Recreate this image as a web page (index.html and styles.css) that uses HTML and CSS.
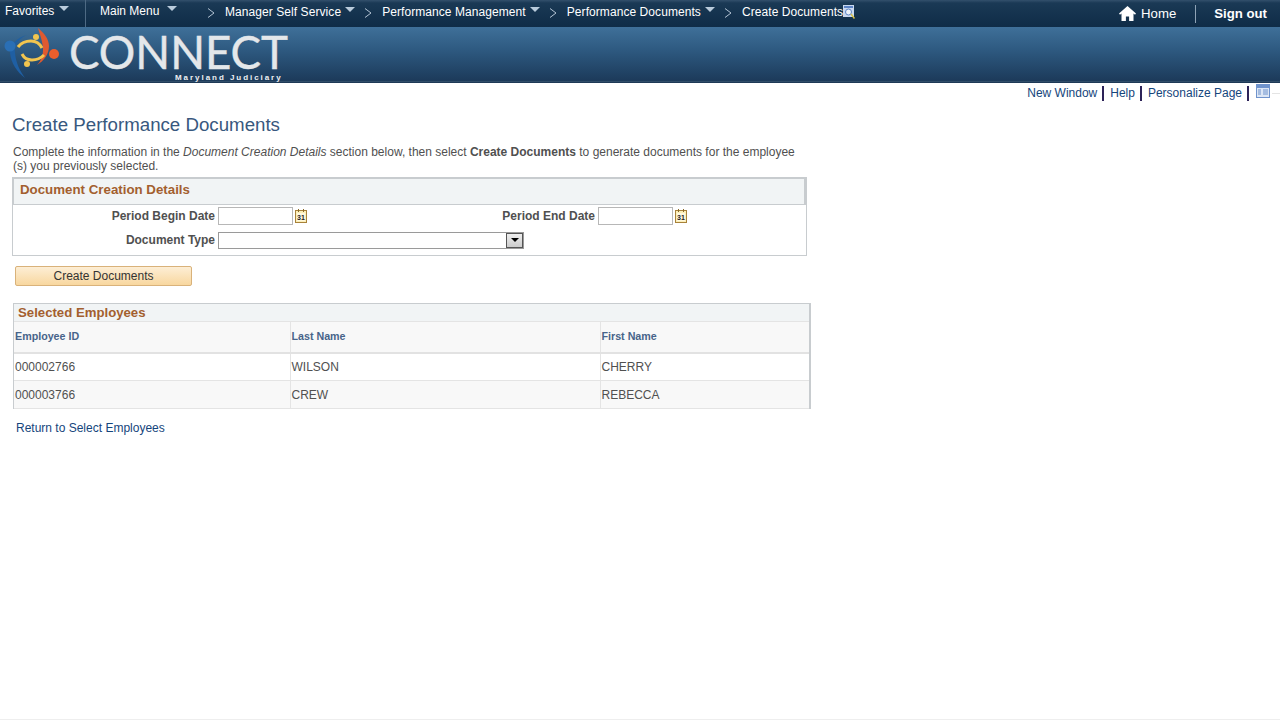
FILE: index.html
```html
<!DOCTYPE html>
<html lang="en">
<head>
<meta charset="utf-8">
<title>Create Performance Documents</title>
<link rel="stylesheet" href="styles.css">
</head>
<body>
<header class="masthead">
  <nav class="topbar">
    <div class="menu-fav"><span>Favorites</span><i class="tri"></i></div>
    <div class="menu-main"><span>Main Menu</span><i class="tri"></i></div>
    <div class="crumbs">
      <svg class="chev" viewBox="0 0 8 10"><path d="M1 .5 7 5 1 9.5"/></svg>
      <span class="crumb">Manager Self Service</span><i class="tri"></i>
      <svg class="chev" viewBox="0 0 8 10"><path d="M1 .5 7 5 1 9.5"/></svg>
      <span class="crumb">Performance Management</span><i class="tri"></i>
      <svg class="chev" viewBox="0 0 8 10"><path d="M1 .5 7 5 1 9.5"/></svg>
      <span class="crumb">Performance Documents</span><i class="tri"></i>
      <svg class="chev" viewBox="0 0 8 10"><path d="M1 .5 7 5 1 9.5"/></svg>
      <span class="crumb crumb-last">Create Documents</span>
      <svg class="search" viewBox="0 0 12 14"><rect width="11" height="12" fill="#c9d8f0"/><rect x="1" y="1" width="9" height="2" fill="#5c83c4"/><circle cx="5.5" cy="7" r="3" fill="#eef3fb" stroke="#5c83c4"/><path d="M8 9l3.5 4.5" stroke="#d8c24a" stroke-width="1.5"/></svg>
    </div>
    <div class="account">
      <svg class="house" viewBox="0 0 17 15"><path fill="#fff" d="M8.5 0 0 7.6l1 1.1 1.5-1.3V15h4.4v-4.5h3.2V15h4.4V7.4L16 8.7l1-1.1z"/></svg>
      <a class="home">Home</a>
      <a class="signout">Sign out</a>
    </div>
  </nav>
  <div class="banner">
    <svg class="logo" viewBox="0 2 66 56">
      <path fill="#1f5fa3" d="M27 10C19 13 14 20 15 28c1 10 5 18 10 25-8-6-14-15-15-25 0-9 8-16 17-18z"/>
      <circle cx="10" cy="21" r="5.5" fill="#2a6fb5"/>
      <path fill="#df5a30" d="M38 3c6 5 11 11 11 18 0 8-5 15-12 19 3-3 6-8 6-15 0-8-3-15-5-22z"/>
      <circle cx="54" cy="29" r="5" fill="#ea5e2c"/>
      <path fill="none" stroke="#f2c54f" stroke-width="3" d="M18 22c3-4 8-6 13-6 5 0 9 3 11 7"/>
      <path fill="none" stroke="#f2c54f" stroke-width="3" d="M22 29c2 4 6 6 10 6 5 0 9-2 12-5"/>
      <circle cx="36" cy="12" r="3" fill="#f2c54f"/>
      <circle cx="27" cy="39" r="3" fill="#f2c54f"/>
    </svg>
    <div class="brand">
      <div class="brand-name">CONNECT</div>
      <div class="brand-sub">Maryland Judiciary</div>
    </div>
  </div>
</header>

<div class="pagebar">
  <a>New Window</a><a>Help</a><a>Personalize Page</a>
  <svg class="table-icon" viewBox="0 0 14 14"><rect x=".5" y=".5" width="13" height="13" fill="#dce6f5" stroke="#6f93cc"/><rect x="1" y="1" width="12" height="3" fill="#6f93cc"/><path d="M2 6h3M2 8h3M2 10h3M7 6h5M7 8h5M7 10h5" stroke="#6f93cc"/></svg>
  <span class="pagebar-tail"></span>
</div>

<main class="content">
  <h1 class="title">Create Performance Documents</h1>
  <p class="intro">Complete the information in the <em>Document Creation Details</em> section below, then select <strong>Create Documents</strong> to generate documents for the employee<wbr>(s) you previously selected.</p>

  <section class="details">
    <h2 class="details-head">Document Creation Details</h2>
    <div class="form-grid">
      <label class="lbl">Period Begin Date</label>
      <div class="date-field">
        <input class="date-input" type="text">
        <svg class="cal" viewBox="0 0 12 14"><rect x=".5" y="1.5" width="11" height="12" fill="#fbeeb8" stroke="#a8823a"/><rect x="2" y="4" width="8" height="8" fill="#fff8dc"/><path d="M3.5 0v3M8.5 0v3" stroke="#8a6a2a"/><text x="6" y="11" text-anchor="middle" class="cal-num">31</text></svg>
      </div>
      <label class="lbl">Period End Date</label>
      <div class="date-field">
        <input class="date-input" type="text">
        <svg class="cal" viewBox="0 0 12 14"><rect x=".5" y="1.5" width="11" height="12" fill="#fbeeb8" stroke="#a8823a"/><rect x="2" y="4" width="8" height="8" fill="#fff8dc"/><path d="M3.5 0v3M8.5 0v3" stroke="#8a6a2a"/><text x="6" y="11" text-anchor="middle" class="cal-num">31</text></svg>
      </div>
      <label class="lbl">Document Type</label>
      <div class="select-box"><span class="select-btn"><i class="select-tri"></i></span></div>
    </div>
  </section>

  <button class="primary" type="button">Create Documents</button>

  <section class="employees">
    <h2 class="employees-head">Selected Employees</h2>
    <table class="grid">
      <colgroup><col class="c1"><col class="c2"><col class="c3"></colgroup>
      <thead><tr><th>Employee ID</th><th>Last Name</th><th>First Name</th></tr></thead>
      <tbody>
        <tr><td>000002766</td><td>WILSON</td><td>CHERRY</td></tr>
        <tr class="alt"><td>000003766</td><td>CREW</td><td>REBECCA</td></tr>
      </tbody>
    </table>
  </section>

  <a class="return">Return to Select Employees</a>
</main>
<footer class="foot"></footer>
</body>
</html>
```
FILE: styles.css
```css
* { box-sizing: border-box; }
html, body { height: 100%; }
body {
  margin: 0;
  background: #fff;
  color: #505050;
  font: 12px/14px "Liberation Sans", Arial, sans-serif;
  display: flex;
  flex-direction: column;
  overflow: hidden;
}
.masthead { flex: none; }
.topbar {
  height: 27px;
  display: flex;
  color: #fff;
  background: linear-gradient(#33506c 0, #1a3955 3px, #0f2c47 100%);
}
.tri {
  display: inline-block;
  flex: none;
  width: 0; height: 0;
  border-left: 5.5px solid transparent;
  border-right: 5.5px solid transparent;
  border-top: 5px solid #b9cbdc;
}
.menu-fav {
  width: 86px;
  padding: 4px 0 0 5px;
  border-right: 1px solid #4e6a84;
  display: flex;
  align-items: flex-start;
  gap: 5px;
}
.menu-fav .tri { margin-top: 2px; }
.menu-main {
  width: 107px;
  padding: 4px 0 0 14px;
  display: flex;
  align-items: flex-start;
  gap: 8px;
}
.menu-main .tri { margin-top: 2px; }
.crumbs { display: flex; align-items: flex-start; padding-top: 5px; }
.crumb { margin-left: 10px; margin-right: 4px; white-space: nowrap; letter-spacing: .07px; }
.crumb-last { margin-right: 0; }
.crumbs .tri { margin-top: 2px; }
.chev { width: 8px; height: 10px; margin: 3px 0 0 9px; fill: none; stroke: #b4c4d4; }
.crumbs .chev:first-child { margin-left: 14px; }
.search { width: 12px; height: 14px; margin-top: 0; }
.account {
  margin-left: auto;
  display: flex;
  align-items: flex-start;
  padding-top: 6px;
  font-size: 13.2px;
  line-height: 16px;
}
.house { width: 17px; height: 15px; margin-right: 5px; }
.home { padding-right: 19px; border-right: 1px solid #8fa3b6; height: 18px; margin-top: -1px; line-height: 18px; }
.signout { font-weight: bold; padding: 0 13px 0 18px; }

.banner {
  height: 56px;
  display: flex;
  background: linear-gradient(#3f7099 0, #2e5a81 40%, #1c3a5a 96%, #33506c 97%, #15304d 100%);
}
.logo { width: 66px; height: 56px; flex: none; }
.brand { margin-left: 3px; color: #e4e7ea; }
.brand-name {
  font: 45.6px/42px Lato, "Open Sans", sans-serif;
  -webkit-text-stroke: .4px #e4e7ea;
  height: 46px;
  padding-top: 4px;
  white-space: nowrap;
}
.brand-sub {
  font: bold 8px/9px "Liberation Sans", Arial, sans-serif;
  letter-spacing: 1.95px;
  color: #eef0f2;
  margin-left: 106px;
  white-space: nowrap;
}

.pagebar {
  flex: none;
  height: 19px;
  display: flex;
  justify-content: flex-end;
  align-items: center;
  color: #15457c;
  padding-top: 1px;
}
.pagebar a {
  padding: 0 5px 0 6px;
  border-right: 2px solid #2d2358;
  line-height: 15px;
}
.table-icon { width: 14px; height: 14px; margin: -4px 0 0 7px; }
.pagebar-tail { width: 8px; height: 1px; margin-left: 2px; background: #e4e4e4; }

.content { flex: 1; padding-left: 12px; }
.title {
  margin: 12px 0 0;
  font-size: 18.7px;
  font-weight: normal;
  line-height: 22px;
  color: #38587e;
}
.intro {
  margin: 9px 0 0 1px;
  width: 790px;
}
.details {
  width: 795px;
  height: 79px;
  margin-top: 4px;
  border: 1px solid #c8cccf;
  border-top-width: 2px;
}
.details-head {
  margin: 0;
  height: 26px;
  padding: 3px 0 0 6px;
  background: #f1f4f5;
  border-bottom: 1px solid #c8cccf;
  border-left: 1px solid #c8cccf;
  border-right: 2px solid #c8cccf;
  font-size: 13.3px;
  line-height: 16px;
  color: #a35f2f;
}
.form-grid {
  display: grid;
  grid-template-columns: 202px 285px 95px auto;
  grid-auto-rows: 24px;
  align-items: center;
  margin-top: -1px;
}
.lbl { font-weight: bold; text-align: right; }
.date-field { display: flex; align-items: center; margin-left: 3px; }
.date-input {
  width: 75px;
  height: 18px;
  margin: 0;
  padding: 0;
  background: #fff;
  border: 1px solid #b7b7b7;
  border-radius: 0;
}
.cal { width: 12px; height: 14px; margin-left: 2px; }
.cal-num { font: bold 7px "Liberation Sans", Arial, sans-serif; fill: #222; }
.select-box {
  grid-column: 2 / 5;
  margin-left: 3px;
  width: 306px;
  height: 17px;
  border: 1px solid #9a9a9a;
  background: #fff;
  display: flex;
  justify-content: flex-end;
}
.select-btn {
  width: 17px;
  height: 15px;
  background: linear-gradient(#eee, #ccc);
  border: 1px solid #555;
  display: flex;
  align-items: center;
  justify-content: center;
}
.select-tri {
  width: 0; height: 0;
  border-left: 4px solid transparent;
  border-right: 4px solid transparent;
  border-top: 4px solid #000;
}
.primary {
  display: block;
  width: 177px;
  height: 20px;
  margin: 10px 0 0 3px;
  padding: 0;
  font: 12px "Liberation Sans", Arial, sans-serif;
  color: #333;
  background: linear-gradient(#fdeed5, #f8d79f);
  border: 1px solid #d9b27a;
  border-radius: 2px;
}
.employees {
  width: 798px;
  margin: 17px 0 0 1px;
  border-top: 1px solid #c8cccf;
  border-left: 1px solid #c8cccf;
  border-right: 2px solid #c8cccf;
}
.employees-head {
  margin: 0;
  height: 17px;
  padding-left: 4px;
  background: #f1f4f5;
  font-size: 13.2px;
  line-height: 17px;
  color: #a35f2f;
}
.grid {
  width: 100%;
  table-layout: fixed;
  border-collapse: collapse;
  border-top: 1px solid #e4e4e4;
}
.c1 { width: 276px; }
.c2 { width: 310px; }
.grid th {
  height: 31px;
  padding: 0 0 2px 1px;
  background: #f8f8f8;
  border-bottom: 2px solid #e2e2e2;
  border-left: 1px solid #e4e4e4;
  text-align: left;
  font-size: 10.7px;
  font-weight: bold;
  color: #47648a;
}
.grid td {
  height: 28px;
  padding: 0 0 0 1px;
  border-bottom: 1px solid #e4e4e4;
  border-left: 1px solid #e4e4e4;
}
.grid th:first-child, .grid td:first-child { border-left: 0; }
.alt td { background: #f8f8f8; }
.return {
  display: block;
  margin: 12px 0 0 4px;
  color: #15457c;
}
.foot { flex: none; height: 1px; background: #eee; }
```
